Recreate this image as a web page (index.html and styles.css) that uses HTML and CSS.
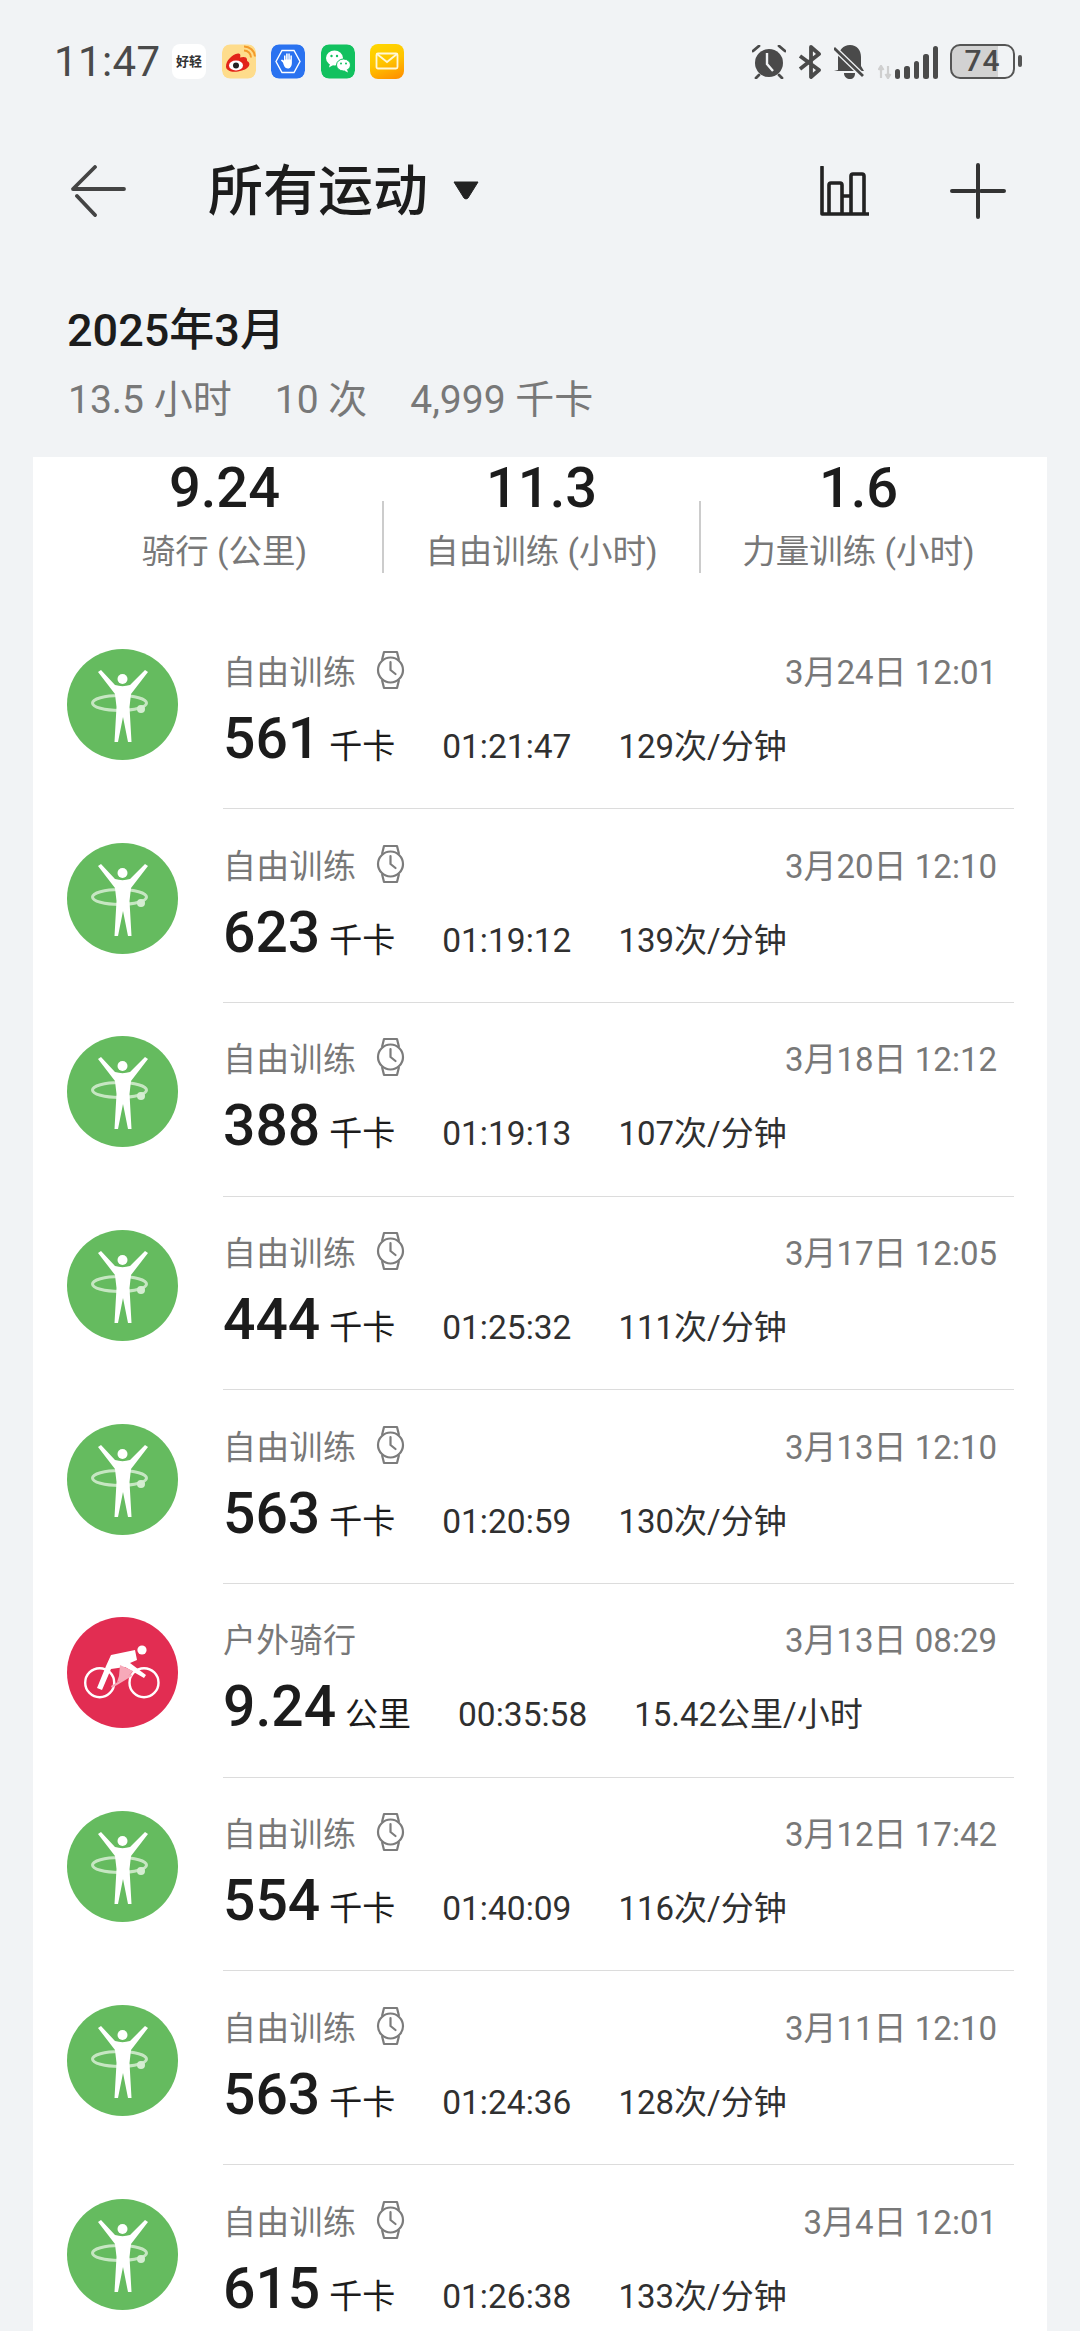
FILE: index.html
```html
<!DOCTYPE html>
<html lang="zh-CN">
<head>
<meta charset="utf-8">
<title>所有运动</title>
<link rel="stylesheet" href="styles.css">
</head>
<body>
<svg class="defs" width="0" height="0" aria-hidden="true">
  <symbol id="hoop" viewBox="0 0 111 111">
    <circle cx="55.5" cy="55.5" r="55.5" fill="#65bb5f"/>
    <ellipse cx="52.5" cy="54" rx="27" ry="7.5" fill="none" stroke="#c6e6c2" stroke-width="3"/>
    <circle cx="74" cy="60" r="4" fill="#d5edd2"/>
    <circle cx="55.5" cy="30" r="5" fill="#fff"/>
    <path d="M31 23l3-2 14 15c5 1.500 10 1.500 15 0l15-15 3 2-17 22-1.500 13 2 35h-3.500l-5-25-5 25h-3.500l2-35-1.500-13z" fill="#fff"/>
  </symbol>
  <symbol id="bike" viewBox="0 0 111 111">
    <circle cx="55.5" cy="55.5" r="55.5" fill="#e22d52"/>
    <circle cx="32.7" cy="65.7" r="14.5" fill="none" stroke="#fff" stroke-width="2.4"/>
    <circle cx="77" cy="65.7" r="14.5" fill="none" stroke="#fff" stroke-width="2.4"/>
    <circle cx="75" cy="33" r="4.6" fill="#fff"/>
    <path d="M44 38l24-5 2 10-7 3 16 12-2 3-19-11-14 2-9 21-5-2 9-22z" fill="#fff"/>
    <path d="M53 48l13 6-7 8-9 3 2-6z" fill="#f7a9b9"/>
    <path d="M44 69l20-12 1 2-20 12z" fill="#f7a9b9"/>
  </symbol>
  <symbol id="watch" viewBox="0 0 29 40">
    <g fill="none" stroke="#7c7c7c" stroke-width="2.2" stroke-linejoin="round">
      <circle cx="14.5" cy="20" r="12.5"/>
      <path d="M6 10l2-8h13l2 8M6 30l2 8h13l2-8"/>
      <path d="M14.5 12v8l5 4" stroke-linecap="round"/>
    </g>
  </symbol>
</svg>

<div class="screen">
  <div class="status">
    <span class="time">11:47</span>
    <div class="apps">
      <span class="app app-hq">好轻</span>
      <svg class="app" viewBox="0 0 34 34">
        <rect width="34" height="34" rx="8" fill="#fedc8c"/>
        <path d="M4 22c0-6 6-12 12-13 2 0 3 1 2 4 3-1 7-1 7 2 0 1 0 2 1 2 3 2 2 8-10 10C9 28 4 26 4 22z" fill="#e2231a"/>
        <ellipse cx="14" cy="21" rx="7" ry="5" fill="#fff"/>
        <circle cx="14" cy="21" r="3" fill="#222"/>
        <path d="M22 6a7 7 0 017 7M22 2a11 11 0 0111 10" fill="none" stroke="#f39a2b" stroke-width="2"/>
      </svg>
      <svg class="app" viewBox="0 0 34 34">
        <rect width="34" height="34" rx="8" fill="#2a72f0"/>
        <path d="M5 17l6-11h12l6 11-6 11H11z" fill="none" stroke="#fff" stroke-width="1.4"/>
        <path d="M13 16v-5h1.5v4h.6v-6h1.6v6h.6v-6h1.5v6h.6v-4h1.5v7c0 4-2 6-4 6-3 0-4-3-5-6l-2-2 1-1z" fill="#fff"/>
      </svg>
      <svg class="app" viewBox="0 0 34 34">
        <rect width="34" height="34" rx="8" fill="#12c15f"/>
        <ellipse cx="13.5" cy="13.5" rx="8.5" ry="7.5" fill="#fff"/>
        <path d="M9 19l-1 4 5-3z" fill="#fff"/>
        <ellipse cx="22.5" cy="20.5" rx="7" ry="6" fill="#fff" stroke="#12c15f" stroke-width="1"/>
        <path d="M26 25l1 3-4-2z" fill="#fff"/>
        <circle cx="10.5" cy="11.5" r="1.2" fill="#12c15f"/><circle cx="16" cy="11.5" r="1.2" fill="#12c15f"/>
        <circle cx="20" cy="19" r="1" fill="#12c15f"/><circle cx="25" cy="19" r="1" fill="#12c15f"/>
      </svg>
      <span class="app app-mail">
        <svg viewBox="0 0 34 34" width="34" height="34"><rect x="6.500" y="9.500" width="21" height="15" rx="1.500" fill="none" stroke="#fff8d8" stroke-width="1.800"/><path d="M7 10l10 8 10-8" fill="none" stroke="#fff8d8" stroke-width="1.800"/></svg>
      </span>
    </div>
    <div class="sys">
      <svg class="ic-alarm" viewBox="0 0 34 34" width="34" height="34">
        <circle cx="17" cy="18" r="14" fill="#4a4a4a"/>
        <path d="M15 8v11l6 7" fill="none" stroke="#f1f3f5" stroke-width="2.400"/>
        <path d="M1 6l6-5M33 6l-6-5M4 33l3-3M30 33l-3-3" stroke="#4a4a4a" stroke-width="2.800" stroke-linecap="round"/>
      </svg>
      <svg class="ic-bt" viewBox="0 0 24 34" width="24" height="34">
        <path d="M2 11l19 14-8 7V2l8 7L2 24" fill="none" stroke="#4a4a4a" stroke-width="3.800" stroke-linejoin="round"/>
      </svg>
      <svg class="ic-bell" viewBox="0 0 30 34" width="30" height="34">
        <path d="M16 0c7 0 11 5 11 12v9l3 5H0l4-1V12C5 5 9 0 16 0z" fill="#4a4a4a"/>
        <path d="M10 28h11c0 4-2 6-5 6s-6-2-6-6z" fill="#4a4a4a"/>
        <path d="M0 3l29 28" stroke="#f1f3f5" stroke-width="5.500"/>
        <path d="M0 3l29 28" stroke="#4a4a4a" stroke-width="2.800"/>
      </svg>
      <svg class="ic-arrows" viewBox="0 0 14 14" width="14" height="14">
        <path d="M3 13V2M0.500 5L3 1l2.500 4M10 1v11M7.500 9L10 13l2.500-4" fill="none" stroke="#cfcfcf" stroke-width="2.200"/>
      </svg>
      <div class="signal">
        <i class="b1"></i><i class="b2"></i><i class="b3"></i><i class="b4"></i><i class="b5"></i>
      </div>
      <div class="battery"><span>74</span></div>
      <i class="nub"></i>
    </div>
  </div>

  <header class="nav">
    <svg class="back" viewBox="0 0 56 52" width="56" height="52">
      <path d="M54 24H3L25 2M7 31l18 19" fill="none" stroke="#444" stroke-width="3.800" stroke-linecap="round" stroke-linejoin="round"/>
    </svg>
    <h1 class="title">所有运动</h1>
    <svg class="caret" viewBox="0 0 28 20" width="28" height="20">
      <path d="M2 1h24l-10 16q-2 2-4 0z" fill="#222" stroke="#222" stroke-width="1" stroke-linejoin="round"/>
    </svg>
    <svg class="chart" viewBox="0 0 50 50" width="50" height="50">
      <path d="M3 1v47h47M10 48V19q0-2 2-2h9q2 0 2 2v29M23 30h9M32 48V10q0-2 2-2h9q2 0 2 2v38" fill="none" stroke="#222" stroke-width="3.600" stroke-linecap="round" stroke-linejoin="round"/>
    </svg>
    <svg class="plus" viewBox="0 0 56 56" width="56" height="56">
      <path d="M28 2v52M2 28h23M31 28h23" fill="none" stroke="#333" stroke-width="4" stroke-linecap="round"/>
    </svg>
  </header>

  <section class="summary">
    <div class="month">2025年3月</div>
    <div class="totals"><span>13.5 小时</span><span>10 次</span><span>4,999 千卡</span></div>
  </section>

  <main class="card">
    <div class="stats">
      <div class="stat"><b>9.24</b><span>骑行 (公里)</span></div>
      <div class="stat"><b>11.3</b><span>自由训练 (小时)</span></div>
      <div class="stat"><b>1.6</b><span>力量训练 (小时)</span></div>
    </div>

    <article class="row">
      <svg class="avatar"><use href="#hoop"/></svg>
      <div class="body"><div class="line1"><span class="name">自由训练</span><svg class="watch"><use href="#watch"/></svg><span class="date">3月24日 12:01</span></div>
      <div class="line2"><b class="num">561</b><span class="unit">千卡</span><span class="dur">01:21:47</span><span class="rate">129次/分钟</span></div></div>
    </article>
    <article class="row">
      <svg class="avatar"><use href="#hoop"/></svg>
      <div class="body"><div class="line1"><span class="name">自由训练</span><svg class="watch"><use href="#watch"/></svg><span class="date">3月20日 12:10</span></div>
      <div class="line2"><b class="num">623</b><span class="unit">千卡</span><span class="dur">01:19:12</span><span class="rate">139次/分钟</span></div></div>
    </article>
    <article class="row">
      <svg class="avatar"><use href="#hoop"/></svg>
      <div class="body"><div class="line1"><span class="name">自由训练</span><svg class="watch"><use href="#watch"/></svg><span class="date">3月18日 12:12</span></div>
      <div class="line2"><b class="num">388</b><span class="unit">千卡</span><span class="dur">01:19:13</span><span class="rate">107次/分钟</span></div></div>
    </article>
    <article class="row">
      <svg class="avatar"><use href="#hoop"/></svg>
      <div class="body"><div class="line1"><span class="name">自由训练</span><svg class="watch"><use href="#watch"/></svg><span class="date">3月17日 12:05</span></div>
      <div class="line2"><b class="num">444</b><span class="unit">千卡</span><span class="dur">01:25:32</span><span class="rate">111次/分钟</span></div></div>
    </article>
    <article class="row">
      <svg class="avatar"><use href="#hoop"/></svg>
      <div class="body"><div class="line1"><span class="name">自由训练</span><svg class="watch"><use href="#watch"/></svg><span class="date">3月13日 12:10</span></div>
      <div class="line2"><b class="num">563</b><span class="unit">千卡</span><span class="dur">01:20:59</span><span class="rate">130次/分钟</span></div></div>
    </article>
    <article class="row">
      <svg class="avatar"><use href="#bike"/></svg>
      <div class="body"><div class="line1"><span class="name">户外骑行</span><span class="date">3月13日 08:29</span></div>
      <div class="line2"><b class="num">9.24</b><span class="unit">公里</span><span class="dur">00:35:58</span><span class="rate">15.42公里/小时</span></div></div>
    </article>
    <article class="row">
      <svg class="avatar"><use href="#hoop"/></svg>
      <div class="body"><div class="line1"><span class="name">自由训练</span><svg class="watch"><use href="#watch"/></svg><span class="date">3月12日 17:42</span></div>
      <div class="line2"><b class="num">554</b><span class="unit">千卡</span><span class="dur">01:40:09</span><span class="rate">116次/分钟</span></div></div>
    </article>
    <article class="row">
      <svg class="avatar"><use href="#hoop"/></svg>
      <div class="body"><div class="line1"><span class="name">自由训练</span><svg class="watch"><use href="#watch"/></svg><span class="date">3月11日 12:10</span></div>
      <div class="line2"><b class="num">563</b><span class="unit">千卡</span><span class="dur">01:24:36</span><span class="rate">128次/分钟</span></div></div>
    </article>
    <article class="row">
      <svg class="avatar"><use href="#hoop"/></svg>
      <div class="body"><div class="line1"><span class="name">自由训练</span><svg class="watch"><use href="#watch"/></svg><span class="date">3月4日 12:01</span></div>
      <div class="line2"><b class="num">615</b><span class="unit">千卡</span><span class="dur">01:26:38</span><span class="rate">133次/分钟</span></div></div>
    </article>
  </main>
</div>
</body>
</html>
```

FILE: styles.css
```css
* { box-sizing: border-box; }
html, body {
  margin: 0;
  padding: 0;
  height: 2331px;
  overflow: hidden;
  background: #f1f3f5;
  font-family: Roboto, "Noto Sans CJK SC", sans-serif;
  color: #1c1c1c;
}
.defs { position: absolute; }
.screen { width: 1080px; height: 2331px; overflow: hidden; }

/* status bar */
.status {
  height: 122px;
  padding: 44px 58px 0 54px;
  display: flex;
  align-items: flex-start;
}
.time {
  font-size: 42px;
  line-height: 36px;
  letter-spacing: 0.4px;
  color: #4a4a4a;
  width: 118px;
}
.apps { display: flex; gap: 15.6px; }
.app { width: 34px; height: 35px; display: block; border-radius: 8px; }
.app-hq {
  background: #fff;
  font-size: 13px;
  line-height: 35px;
  text-align: center;
  font-weight: 700;
  color: #333;
  white-space: nowrap;
}
.app-mail { background: linear-gradient(160deg, #ffd800 0%, #ffc400 50%, #ff8a00 100%); }
.sys { margin-left: auto; display: flex; align-items: flex-start; }
.ic-alarm { margin-top: 1px; }
.ic-bt { margin: 1px 0 0 12px; }
.ic-bell { margin: 1px 0 0 12px; }
.ic-arrows { margin: 21px 0 0 14px; }
.signal { display: flex; align-items: flex-end; gap: 4px; height: 34px; margin: 1px 0 0 3px; }
.signal i { width: 5.4px; background: #4a4a4a; border-radius: 2.5px; display: block; }
.b1 { height: 10px; } .b2 { height: 13px; } .b3 { height: 18px; } .b4 { height: 25px; } .b5 { height: 33px; }
.battery {
  width: 65px;
  height: 35px;
  margin-left: 12px;
  border: 2.5px solid #555;
  border-radius: 10px;
  background: linear-gradient(90deg, #d2d2d2 76%, transparent 76%);
  text-align: center;
  font-size: 30px;
  line-height: 30px;
  font-weight: 500;
  color: #4a4a4a;
  letter-spacing: 1px;
}
.nub { width: 4px; height: 12px; margin: 11px 0 0 3px; background: #555; border-radius: 2px; display: block; }

/* nav */
.nav {
  height: 134px;
  padding: 3px 74px 0 70px;
  display: flex;
  align-items: center;
}
.title {
  margin: 0 0 0 82px;
  font-size: 55px;
  font-weight: 500;
  line-height: 60px;
  color: #1c1c1c;
}
.caret { margin-left: 24px; }
.chart { margin-left: auto; }
.plus { margin-left: 81px; }

/* summary */
.summary { padding: 45px 0 0 67px; height: 201px; }
.month { font-size: 45px; line-height: 60px; font-weight: 500; color: #1c1c1c; }
.totals {
  margin: 14px 0 0 1px;
  display: flex;
  gap: 43px;
  font-size: 39px;
  line-height: 50px;
  color: #787878;
}

/* card */
.card {
  margin: 0 33px;
  background: #fff;
  height: 1874px;
}
.stats {
  display: grid;
  grid-template-columns: repeat(3, 317px);
  padding: 0 33px;
  height: 158.5px;
}
.stat {
  display: flex;
  flex-direction: column;
  align-items: center;
  height: 116px;
  position: relative;
}
.stat + .stat::before {
  content: "";
  position: absolute;
  left: -1px;
  top: 44px;
  height: 72px;
  width: 1.5px;
  background: #ccc;
}
.stat b { font-size: 56px; line-height: 58px; font-weight: 500; color: #1c1c1c; margin-top: 2px; }
.stat span { font-size: 33.500px; line-height: 44px; color: #787878; margin-top: 13px; white-space: nowrap; }

.row {
  height: 193.7px;
  display: flex;
  align-items: flex-start;
  padding-left: 33px;
  padding-right: 33px;
}
.avatar { width: 111px; height: 111px; flex: none; margin: 33.5px 0 0 1px; }
.body {
  margin-left: 45px;
  flex: 1;
  height: 193.7px;
  border-bottom: 1.5px solid #dcdcdc;
  padding-top: 32.5px;
}
.row:last-child .body { border-bottom: 0; }
.line1 {
  display: flex;
  align-items: center;
  height: 44px;
  padding-right: 17px;
  font-size: 33px;
  color: #787878;
}
.name { letter-spacing: 0.3px; }
.watch { width: 29px; height: 40px; margin-left: 20px; }
.date { margin-left: auto; }
.line2 {
  display: flex;
  align-items: baseline;
  height: 60px;
  margin-top: 17px;
  font-size: 33px;
  color: #303030;
}
.num { font-size: 57px; line-height: 60px; font-weight: 500; color: #1c1c1c; }
.unit { margin-left: 9px; font-size: 33px; color: #1c1c1c; }
.dur { margin-left: 47px; font-size: 33.500px; }
.rate { margin-left: 47px; }
```
